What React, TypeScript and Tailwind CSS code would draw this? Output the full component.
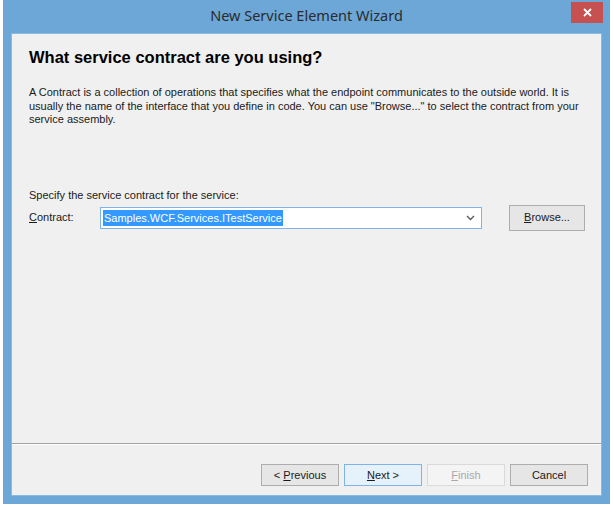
import React from "react";

const sans = { fontFamily: '"Liberation Sans", Arial, sans-serif' };

function Btn({
  children,
  variant = "normal",
}: {
  children: React.ReactNode;
  variant?: "normal" | "default" | "disabled";
}) {
  const cls =
    variant === "default"
      ? "bg-[#e5f1fb] border-[#7eb4ea] text-[#1a1a1a]"
      : variant === "disabled"
      ? "bg-[#f4f4f4] border-[#dadada] text-[#a8a8a8]"
      : "bg-[#e6e6e6] border-[#adadad] text-[#1a1a1a]";
  return (
    <div
      className={`w-[78px] h-[22px] border flex items-center justify-center text-[11px] ${cls}`}
      style={sans}
    >
      {children}
    </div>
  );
}

export default function App() {
  return (
    <div className="w-[613px] h-[505px] bg-white overflow-hidden">
      <div className="ml-[3px] w-[607px] h-[504px] bg-[#6ca7d8] flex flex-col">
        {/* Title bar */}
        <div className="relative h-[33px] flex items-center justify-center">
          <span
            className="text-[14.5px] text-[#2b2b2b] -mt-[1px]"
            style={{ fontFamily: '"Noto Sans", "Open Sans", sans-serif' }}
          >
            New Service Element Wizard
          </span>
          <div className="absolute right-[7px] top-[2px] w-[32px] h-[21px] bg-[#c75050] flex items-center justify-center">
            <svg width="9" height="9" viewBox="0 0 9 9">
              <path d="M1 1L8 8M8 1L1 8" stroke="white" strokeWidth="1.8" />
            </svg>
          </div>
        </div>
        {/* Client area */}
        <div className="mx-[8px] mb-[8px] flex-1 bg-[#f0f0f0] border border-[#8ab9e0] flex flex-col">
          <div className="pl-[17px] pt-[13px]">
            <div
              className="text-[16.5px] font-bold text-black leading-[20px]"
              style={sans}
            >
              What service contract are you using?
            </div>
            <div
              className="mt-[19px] text-[11px] leading-[13.5px] text-[#1a1a1a]"
              style={sans}
            >
              A Contract is a collection of operations that specifies what the endpoint communicates to the outside world. It is
              <br />
              usually the name of the interface that you define in code. You can use "Browse..." to select the contract from your
              <br />
              service assembly.
            </div>
            <div
              className="mt-[62px] text-[11px] leading-[13px] text-[#1a1a1a]"
              style={sans}
            >
              Specify the service contract for the service:
            </div>
            <div className="mt-[3px] flex items-center">
              <div className="w-[71px] text-[11px] text-[#1a1a1a]" style={sans}>
                <span className="underline">C</span>ontract:
              </div>
              <div className="w-[382px] h-[22px] bg-white border border-[#7eb4ea] flex items-center pl-[2px] pr-[6px]">
                <span
                  className="bg-[#3399ff] text-white text-[11px] leading-[16px] px-[1px]"
                  style={sans}
                >
                  Samples.WCF.Services.ITestService
                </span>
                <div className="flex-1" />
                <svg width="9" height="6" viewBox="0 0 9 6">
                  <path
                    d="M1 1L4.5 4.5L8 1"
                    stroke="#5a5a5a"
                    strokeWidth="1.4"
                    fill="none"
                  />
                </svg>
              </div>
              <div
                className="ml-[27px] w-[76px] h-[26px] border border-[#adadad] bg-[#e6e6e6] flex items-center justify-center text-[11px] text-[#1a1a1a]"
                style={sans}
              >
                <span className="underline">B</span>rowse...
              </div>
            </div>
          </div>
          <div className="flex-1" />
          <div className="h-[1px] bg-[#a0a0a0]" />
          <div className="h-[1px] bg-white" />
          <div className="flex justify-end gap-[5px] pr-[13px] pt-[19px] pb-[9px]">
            <Btn>
              &lt;&nbsp;<span className="underline">P</span>revious
            </Btn>
            <Btn variant="default">
              <span className="underline">N</span>ext&nbsp;&gt;
            </Btn>
            <Btn variant="disabled">
              <span className="underline">F</span>inish
            </Btn>
            <Btn>Cancel</Btn>
          </div>
        </div>
      </div>
    </div>
  );
}
